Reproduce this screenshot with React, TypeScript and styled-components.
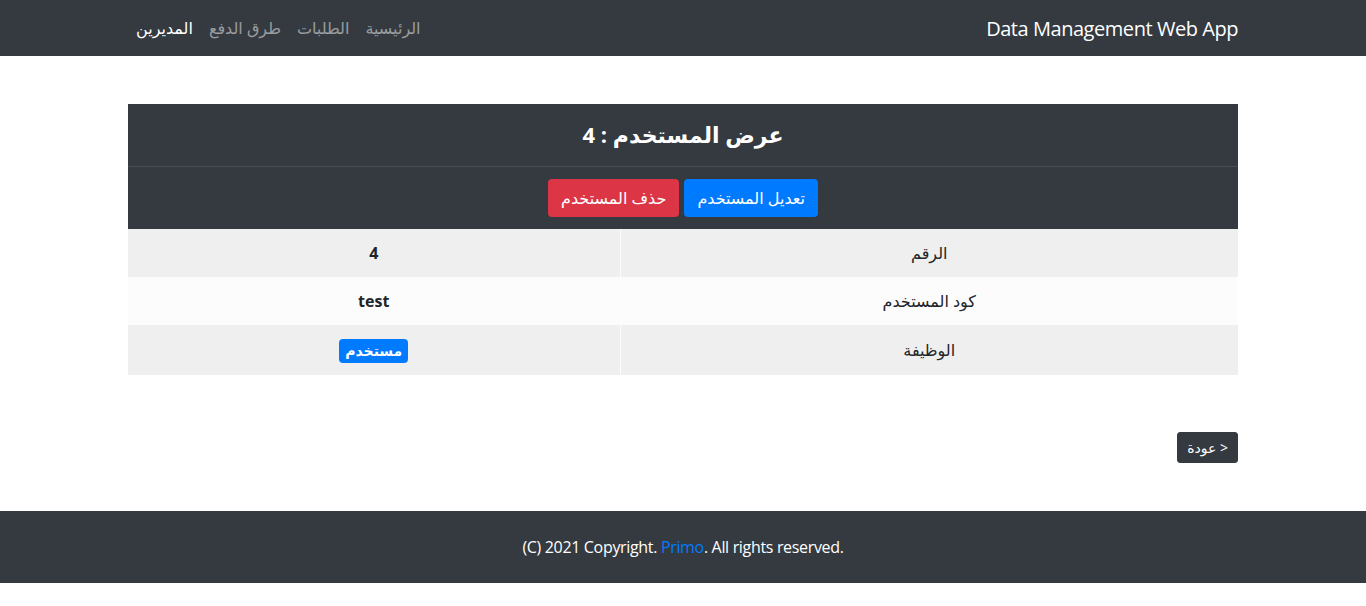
import styled, { createGlobalStyle } from "styled-components";

const GlobalStyle = createGlobalStyle`
  * { box-sizing: border-box; }
  body {
    margin: 0;
    direction: rtl;
    font-family: "Open Sans", "DejaVu Sans", sans-serif;
    font-size: 16px;
    line-height: 1.5;
    color: #212529;
    background: #fff;
  }
`;

const links = [
  { label: "الرئيسية", active: false },
  { label: "الطلبات", active: false },
  { label: "طرق الدفع", active: false },
  { label: "المديرين", active: true },
];

const rows = [
  { label: "الرقم", value: "4" },
  { label: "كود المستخدم", value: "test" },
  { label: "الوظيفة", value: null },
];

export default function App() {
  return (
    <>
      <GlobalStyle />
      <Navbar>
        <Container>
          <Brand>Data Management Web App</Brand>
          <NavList>
            {links.map((l) => (
              <NavLink key={l.label} active={l.active}>
                {l.label}
              </NavLink>
            ))}
          </NavList>
        </Container>
      </Navbar>

      <Main>
        <Container>
          <Table>
            <thead>
              <tr>
                <HeadCell colSpan={2}>
                  <Title>عرض المستخدم : 4</Title>
                </HeadCell>
              </tr>
              <tr>
                <HeadCell colSpan={2}>
                  <Actions>
                    <Button variant="primary">تعديل المستخدم</Button>
                    <Button variant="danger">حذف المستخدم</Button>
                  </Actions>
                </HeadCell>
              </tr>
            </thead>
            <tbody>
              {rows.map((r, i) => (
                <Row key={r.label} striped={i % 2 === 0}>
                  <LabelCell>{r.label}</LabelCell>
                  <ValueCell>
                    {r.value ?? <Badge>مستخدم</Badge>}
                  </ValueCell>
                </Row>
              ))}
            </tbody>
          </Table>
          <BackRow>
            <BackButton>&lt; عودة</BackButton>
          </BackRow>
        </Container>
      </Main>

      <Footer>
        (C) 2021 Copyright. <FooterLink>Primo</FooterLink>. All rights reserved.
      </Footer>
    </>
  );
}

const Container = styled.div`
  width: 1110px;
  margin: 0 auto;
`;

const Navbar = styled.nav`
  background: #343a40;
  height: 56px;

  & > div {
    height: 100%;
    display: flex;
    align-items: center;
    justify-content: space-between;
  }
`;

const Brand = styled.span`
  color: #fff;
  font-size: 20px;
  line-height: 30px;
  letter-spacing: -0.45px;
  margin-top: 2px;
`;

const NavList = styled.ul`
  display: flex;
  list-style: none;
  margin: 0;
  padding: 0;
`;

const NavLink = styled.li<{ active: boolean }>`
  padding: 8px;
  color: ${(p) => (p.active ? "#fff" : "rgba(255, 255, 255, 0.5)")};
  font-size: 16px;
`;

const Main = styled.main`
  padding: 48px 0;
`;

const Table = styled.table`
  width: 100%;
  border-collapse: collapse;
`;

const HeadCell = styled.th`
  background: #343a40;
  color: #fff;
  padding: 12px;
  text-align: center;
  border-top: 1px solid #454d55;

  tr:first-child > & {
    border-top: none;
    padding: 12px 12px 14px;
  }
`;

const Title = styled.h3`
  margin: 0;
  font-size: 22px;
  font-weight: 700;
  line-height: 36px;
`;

const Actions = styled.div`
  display: flex;
  justify-content: center;
  gap: 5px;
`;

const Button = styled.button<{ variant: "primary" | "danger" }>`
  font-family: inherit;
  font-size: 16px;
  line-height: 24px;
  height: 38px;
  padding: 6px 12px;
  border: 1px solid transparent;
  border-radius: 4px;
  color: #fff;
  background: ${(p) => (p.variant === "primary" ? "#007bff" : "#dc3545")};
`;

const Row = styled.tr<{ striped: boolean }>`
  background: ${(p) => (p.striped ? "#efefef" : "#fcfcfc")};

  & + & > td {
    border-top: 1px solid ${(p) => (p.striped ? "#efefef" : "#fcfcfc")};
  }
`;

const LabelCell = styled.td`
  width: 618px;
  padding: 12px;
  text-align: center;
  border-left: 1px solid #fcfcfc;
`;

const ValueCell = styled.td`
  padding: 12px;
  text-align: center;
  font-weight: 700;
`;

const Badge = styled.span`
  display: inline-block;
  background: #007bff;
  color: #fff;
  font-size: 14px;
  font-weight: 700;
  line-height: 1;
  padding: 5px 6px 5px;
  border-radius: 4px;
  vertical-align: middle;
`;

const BackRow = styled.div`
  display: flex;
  justify-content: flex-start;
  margin-top: 57px;
`;

const BackButton = styled.button`
  font-family: inherit;
  font-size: 14px;
  line-height: 21px;
  height: 31px;
  padding: 4px 9px;
  border: 1px solid #343a40;
  border-radius: 3px;
  background: #343a40;
  color: #fff;
`;

const Footer = styled.footer`
  background: #343a40;
  color: #fff;
  direction: ltr;
  height: 72px;
  display: flex;
  align-items: center;
  justify-content: center;
  font-size: 16px;
  letter-spacing: -0.33px;
  white-space: pre;
`;

const FooterLink = styled.span`
  color: #007bff;
`;
